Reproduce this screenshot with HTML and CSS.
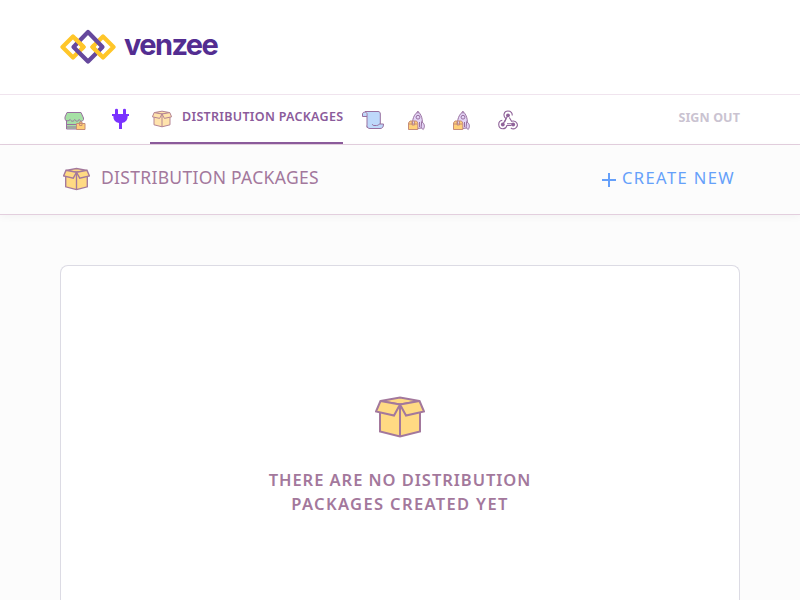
FILE: index.html
```html
<!DOCTYPE html>
<html lang="en">
<head>
<meta charset="utf-8">
<title>Distribution Packages</title>
<link rel="stylesheet" href="styles.css">
</head>
<body>
<svg class="defs" width="0" height="0">
  <symbol id="box" viewBox="0 0 50 42">
    <path d="M5 13v22.500L25 40.500l20-5V13L25 8.500z"/>
    <path d="M5.500 5 25 1.500 44.500 5 25 8.500z"/>
    <path d="M5.500 5 1 15.500l18 4 6-11z"/>
    <path d="M44.500 5 49 15.500l-18 4-6-11z"/>
    <path d="M25 8.500v32"/>
  </symbol>
  <symbol id="rocket" viewBox="0 0 20 22">
    <path fill="#e3d4f6" d="M6 19c-1-6-1-13 5-17.500C16 6 16 13 14.500 18z"/>
    <path fill="#e3d4f6" d="M14.700 11.500c3 2.500 3.500 5 1.500 8-1-.5-2-1.500-2-3z"/>
    <circle fill="#e3d4f6" cx="11" cy="7.200" r="1.900"/>
    <path d="M11 1v2.500M12.500 12v5"/>
    <path fill="#ffd078" stroke="#c68d79" d="M1.500 13 3 11h6.500l1.300 2v6.500H1.500zM1.500 14h9M5 11v4h2.500v-4"/>
  </symbol>
</svg>
<header class="header">
  <a class="logo">
    <svg width="56" height="37" viewBox="0 0 56 37" fill="none" stroke-width="4.200" stroke-linejoin="round">
      <path stroke="#ffc629" d="M13 8.500 23.500 19 13 29.500 2.500 19z"/>
      <path stroke="#ffc629" d="M43 8.500 53.500 19 43 29.500 32.500 19z"/>
      <path stroke="#66489d" d="M28 4 42.500 19 28 33.500 13.500 19z"/>
      <path stroke="#ffc629" d="M15 10.500l8.500 8.500-2 2M41 27.500 32.500 19l2-2"/>
    </svg>
    <span class="wordmark">venzee</span>
  </a>
</header>
<nav class="nav">
  <a class="store"><svg width="22" height="22" viewBox="0 0 22 22">
    <path fill="#a6e0a5" d="M2.500 10v9H17v-9M2.500 14.500H17M2.500 17H17"/>
    <path fill="#a6e0a5" d="M3 2.500h14l2.500 5.500v1.500c-1 2.300-3 2.300-4.300 0-1.200 2.300-3.300 2.300-4.500 0-1.200 2.300-3.300 2.300-4.500 0C4.500 11.500 2 11 1 9.500V7z"/>
    <path fill="#ffd078" stroke="#c68d79" d="M12.500 13.500h8.500v6h-8.500zM15.500 13.500V12h2.500v3.500h-2.500z"/>
  </svg></a>
  <a class="plug"><svg width="18" height="22" viewBox="0 0 18 22">
    <path fill="#7a32ff" stroke="none" d="M3 6V2q0-1.300 1.500-1.300T6 2v4h5V2q0-1.300 1.500-1.300T14 2v4h3v2h-1.300c0 4-1.900 6.300-5.700 7v6H7v-6C3.200 14.300 1.300 12 1.300 8H0V6z"/>
  </svg></a>
  <a class="active"><svg class="box-small" width="20" height="18"><use href="#box"/></svg><span>DISTRIBUTION PACKAGES</span></a>
  <a class="scroll"><svg width="22" height="20" viewBox="0 0 22 20">
    <path fill="#bed8fa" d="M3 1.500h13c1.700 0 2.300 1 2.300 2.500v13.500H5V4c0-2.500-4.500-2.500-4.500 0v2.500H5"/>
    <path fill="#bed8fa" d="M5 15.500c0 2 1 3 3 3h10c2.500 0 3.500-1.500 3.500-4.500H18c-1.500 0-1.200 1.500-3.500 1.500H12c-1 0-1.500-.3-1.500-1.500"/>
  </svg></a>
  <a class="rocket"><svg width="20" height="22"><use href="#rocket"/></svg></a>
  <a class="rocket"><svg width="20" height="22"><use href="#rocket"/></svg></a>
  <a class="hook"><svg width="20" height="20" viewBox="0 0 20 20" fill="none" stroke="#8f6299" stroke-width="1.100">
    <path d="M6.500 12.300 8 8.800C4.500 6 5.800 1 10 1c2.800 0 4.500 2 4.200 4.500"/>
    <path d="M4.300 10.300C-.7 11 -.3 18.700 4.800 18.700c2.200 0 3.600-1.200 4.100-3.200h4.600"/>
    <path d="M11.300 7.500l2.300 3.800c5.200-1.500 7.600 4.300 4 6.800-1.600 1.100-3.600.8-4.800-.3"/>
    <path d="M10 5.300 5.300 13.500M9 13.800h6"/>
    <g fill="#8f6299" stroke="none"><circle cx="10" cy="5.300" r="1.900"/><circle cx="4.800" cy="14.500" r="1.900"/><circle cx="15.200" cy="14.500" r="1.900"/></g>
  </svg></a>
  <a class="signout">SIGN OUT</a>
</nav>
<section class="titlebar">
  <svg class="box-medium" width="27" height="24"><use href="#box"/></svg>
  <h1>DISTRIBUTION PACKAGES</h1>
  <a class="create"><svg width="14" height="14" viewBox="0 0 14 14"><path d="M7 0v14M0 7h14" stroke="#65a0fa" stroke-width="2"/></svg><span>CREATE NEW</span></a>
</section>
<main class="panel">
  <svg class="box-large" width="50" height="42"><use href="#box"/></svg>
  <p>THERE ARE NO DISTRIBUTION<br><span>PACKAGES CREATED YET</span></p>
</main>
</body>
</html>
```
FILE: styles.css
```css
* { box-sizing: border-box; }
body {
  margin: 0;
  height: 600px;
  overflow: hidden;
  background: #fcfcfc;
  font-family: "Noto Sans", sans-serif;
}
svg { display: block; flex: none; }
.defs { position: absolute; }
.header {
  height: 95px;
  padding: 28px 60px 0;
  background: #fff;
  border-bottom: 1px solid #f0e4ee;
}
.logo { display: flex; align-items: flex-start; gap: 8px; }
.wordmark {
  font: 700 29px/34px Inter, sans-serif;
  letter-spacing: -1.600px;
  color: #532d91;
}
.nav {
  display: flex;
  height: 50px;
  padding: 0 60px 0 64px;
  background: #fff;
  border-bottom: 1px solid #e3cfde;
  fill: none;
  stroke: #98709f;
}
.nav a { padding-top: 14px; }
.nav .store { padding-top: 15px; }
.nav .plug { margin-left: 26px; padding-top: 13px; }
.nav .active {
  display: flex;
  width: 193px;
  margin-left: 20px;
  padding: 0 0 0 2px;
  border-bottom: 2px solid #8b5b9b;
}
.active span {
  margin-left: 10px;
  font-size: 12.500px;
  font-weight: 600;
  line-height: 44px;
  letter-spacing: 0.300px;
  white-space: nowrap;
  color: #8b5b9b;
}
.box-small {
  margin-top: 15px;
  fill: #ffe3ac;
  stroke: #b48494;
  stroke-width: 2.500;
}
.nav .scroll { margin-left: 19px; padding-top: 15px; }
.nav .rocket { margin-left: 23px; padding-top: 15px; }
.nav .rocket + .rocket { margin-left: 25px; }
.nav .hook { margin-left: 26px; padding-top: 15px; }
.nav .signout {
  margin-left: auto;
  padding: 0;
  font-size: 12.500px;
  font-weight: 700;
  line-height: 46px;
  letter-spacing: 0.100px;
  color: #cac3d1;
}
.titlebar {
  display: flex;
  height: 70px;
  padding: 0 66px 0 63px;
  border-bottom: 1px solid #e3cfde;
  box-shadow: 0 2px 8px #0000000a;
}
.box-medium, .box-large { fill: #ffda83; stroke: #a3789c; stroke-width: 2; }
.box-medium { margin-top: 22px; stroke-width: 2.500; }
h1 {
  margin: 0 0 0 11px;
  font-size: 17.500px;
  font-weight: 400;
  line-height: 64px;
  letter-spacing: 0.300px;
  white-space: nowrap;
  color: #a3789c;
}
.create { display: flex; margin-left: auto; color: #65a0fa; }
.create svg { margin: 28px 6px 0 0; }
.create span {
  margin-right: -1px;
  font-size: 16.500px;
  line-height: 65px;
  letter-spacing: 1.400px;
  white-space: nowrap;
}
.panel {
  display: flex;
  flex-direction: column;
  align-items: center;
  height: 335px;
  margin: 50px 60px 0;
  padding-top: 130px;
  border: 1px solid #dcdbe4;
  border-bottom: 0;
  border-radius: 8px 8px 0 0;
  background: #fff;
}
.panel p {
  margin: 30px 0 0;
  font-size: 16.500px;
  font-weight: 600;
  line-height: 24px;
  letter-spacing: 0.950px;
  text-align: center;
  white-space: nowrap;
  color: #a3789c;
}
.panel p span { letter-spacing: 1.350px; }
```
